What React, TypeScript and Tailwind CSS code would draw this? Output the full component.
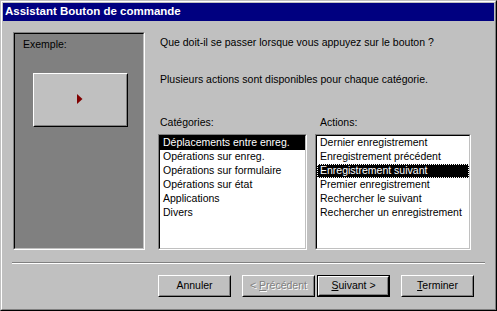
import React from 'react';

const categories = [
  'Déplacements entre enreg.',
  'Opérations sur enreg.',
  'Opérations sur formulaire',
  'Opérations sur état',
  'Applications',
  'Divers',
];

const actions = [
  'Dernier enregistrement',
  'Enregistrement précédent',
  'Enregistrement suivant',
  'Premier enregistrement',
  'Rechercher le suivant',
  'Rechercher un enregistrement',
];

function ListBox({ items, selected, focused }: { items: string[]; selected: number; focused?: boolean }) {
  return (
    <div className="flex-1 border border-t-[#808080] border-l-[#808080] border-r-white border-b-white">
      <div className="h-full bg-white border border-t-black border-l-black border-r-[#c0c0c0] border-b-[#c0c0c0]">
        {items.map((item, i) => (
          <div
            key={item}
            className={`h-[14px] leading-[13px] pl-[3px] whitespace-nowrap ${
              i === selected ? 'bg-black text-white' : 'text-black'
            } ${i === selected && focused ? 'outline-1 outline-dotted outline-white -outline-offset-1' : ''}`}
          >
            {item}
          </div>
        ))}
      </div>
    </div>
  );
}

function Button({
  children,
  disabled,
  isDefault,
  className = '',
}: {
  children: React.ReactNode;
  disabled?: boolean;
  isDefault?: boolean;
  className?: string;
}) {
  return (
    <div className={`w-[73px] h-[22px] ${isDefault ? 'border border-black' : ''} ${className}`}>
      <div className="h-full border border-t-white border-l-white border-r-black border-b-black">
        <div
          className={`h-full flex items-center justify-center border border-t-[#c0c0c0] border-l-[#c0c0c0] border-r-[#808080] border-b-[#808080] ${
            disabled ? 'text-[#808080] [text-shadow:1px_1px_0_#fff]' : 'text-black'
          }`}
        >
          <span className="whitespace-pre">{children}</span>
        </div>
      </div>
    </div>
  );
}

export default function App() {
  return (
    <div className="w-[497px] h-[311px] bg-[#c0c0c0] text-[10.5px] font-['Liberation_Sans',Arial,sans-serif] text-black">
      <div className="h-full border border-t-[#c0c0c0] border-l-[#c0c0c0] border-r-black border-b-black">
        <div className="h-full flex flex-col p-px border border-t-white border-l-white border-r-[#808080] border-b-[#808080]">
          <div className="h-[18px] shrink-0 bg-[#000080] text-white font-bold text-[11.5px] pl-[2px] flex items-center">
            Assistant Bouton de commande
          </div>

          <div className="flex-1 flex flex-col">
            <div className="flex ml-[10px] mt-[11px] h-[218px]">
              <div className="w-[132px] h-full border border-t-[#808080] border-l-[#808080] border-r-white border-b-white">
                <div className="h-full bg-[#808080] border border-t-black border-l-black border-r-[#c0c0c0] border-b-[#c0c0c0] flex flex-col">
                  <div className="mt-[4px] ml-[8px] leading-[13px]">Exemple:</div>
                  <div className="ml-[18px] mt-[22px] w-[95px] h-[54px] border border-t-white border-l-white border-r-black border-b-black">
                    <div className="h-full bg-[#c0c0c0] border border-t-[#c0c0c0] border-l-[#c0c0c0] border-r-[#808080] border-b-[#808080] flex items-center justify-center">
                      <svg width="6" height="10" viewBox="0 0 6 10" className="ml-[-2px] mt-[-2px]">
                        <polygon points="0,0 5.5,5 0,10" fill="#800000" />
                      </svg>
                    </div>
                  </div>
                </div>
              </div>

              <div className="ml-[13px] flex flex-col w-[313px]">
                <p className="pl-[2px] mt-[4px] leading-[13px]">
                  Que doit-il se passer lorsque vous appuyez sur le bouton ?
                </p>
                <p className="pl-[2px] mt-[24px] leading-[13px]">
                  Plusieurs actions sont disponibles pour chaque catégorie.
                </p>
                <div className="flex flex-1 mt-[30px]">
                  <div className="w-[149px] flex flex-col">
                    <div className="pl-[2px] leading-[13px] mb-[5px]">Catégories:</div>
                    <ListBox items={categories} selected={0} />
                  </div>
                  <div className="w-[156px] ml-[8px] flex flex-col">
                    <div className="pl-[5px] leading-[13px] mb-[5px]">Actions:</div>
                    <ListBox items={actions} selected={2} focused />
                  </div>
                </div>
              </div>
            </div>

            <div className="ml-[9px] mt-[12px] w-[473px] h-[2px] border-t border-t-[#808080] border-b border-b-white" />

            <div className="flex ml-[155px] mt-[11px]">
              <Button>Annuler</Button>
              <Button disabled className="ml-[11px]">
                {'< '}<u className="underline-offset-1">P</u>récédent
              </Button>
              <Button isDefault className="ml-[2px]">
                <u className="underline-offset-1">S</u>uivant {'>'}
              </Button>
              <Button className="ml-[11px]">
                <u className="underline-offset-1">T</u>erminer
              </Button>
            </div>
          </div>
        </div>
      </div>
    </div>
  );
}
